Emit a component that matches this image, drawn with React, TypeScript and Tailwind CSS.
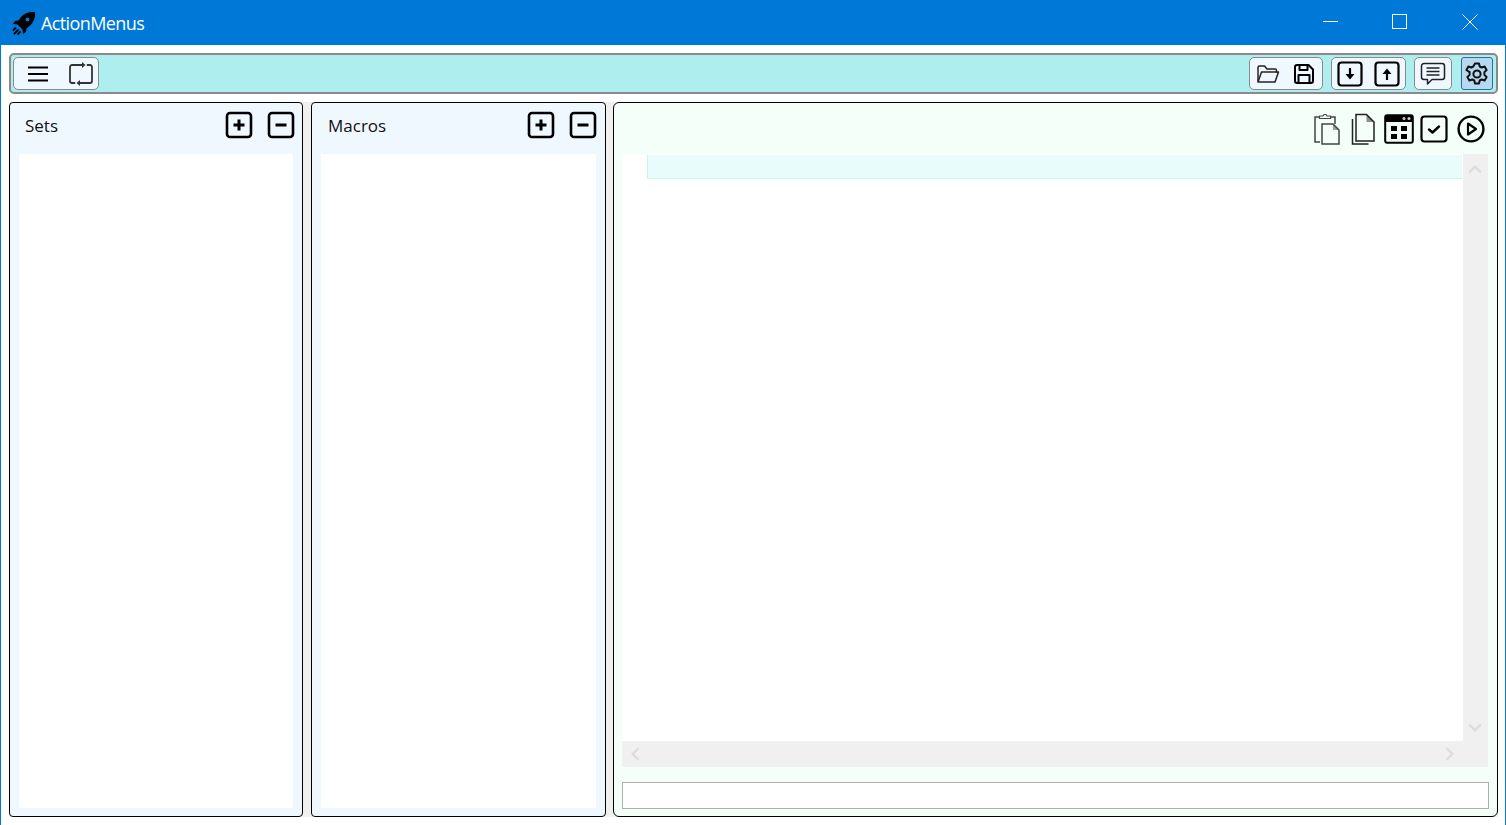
import React from "react";

const stroke = { fill: "none", stroke: "currentColor", strokeLinecap: "round", strokeLinejoin: "round" } as const;

function BoxIcon({ children }: { children: React.ReactNode }) {
    return (
        <svg width="28" height="28" viewBox="0 0 28 28" className="text-black">
            <rect x="2" y="2" width="24" height="24" rx="3" {...stroke} strokeWidth="2.6" />
            {children}
        </svg>
    );
}

function Rocket() {
    return (
        <svg width="24" height="24" viewBox="0 0 24 24" className="text-black">
            <path d="M23 1c-6-.5-10.500 1-14 5L6.500 9.500 3 10l-2 3 4.500.5 5 5 .5 4.500 3-2 .5-3.500 3.500-3c4-3.500 5.500-8 5-14z" fill="currentColor" />
            <circle cx="15.500" cy="8.500" r="2" fill="#0078d7" />
            <path d="M3.500 17l-2 2M6 19l-3.500 3.500M8 21l-2 2" {...stroke} strokeWidth="1.800" />
        </svg>
    );
}

function Hamburger() {
    return (
        <svg width="22" height="18" viewBox="0 0 22 18" className="text-black">
            <path d="M1 2.500h20M1 9h20M1 15.500h20" {...stroke} strokeWidth="2.200" strokeLinecap="butt" />
        </svg>
    );
}

function Repeat() {
    return (
        <svg width="24" height="24" viewBox="0 0 24 24" className="text-[#333]">
            <path d="M13 3H3a2 2 0 0 0-2 2v14a2 2 0 0 0 2 2h2.500" {...stroke} strokeWidth="1.800" />
            <path d="M11 21h10a2 2 0 0 0 2-2V5a2 2 0 0 0-2-2h-2.500" {...stroke} strokeWidth="1.800" />
            <path d="M13 0l3.500 3-3.500 3z" fill="currentColor" />
            <path d="M11 18l-3.500 3 3.500 3z" fill="currentColor" />
        </svg>
    );
}

function Folder() {
    return (
        <svg width="24" height="20" viewBox="0 0 24 20" className="text-[#222]">
            <path d="M2 17V3.500A1.500 1.500 0 0 1 3.500 2h5l2.500 3h8a1.500 1.500 0 0 1 1.500 1.500V8" {...stroke} strokeWidth="1.500" />
            <path d="M2 18l3.500-10h17L19 18H2z" {...stroke} strokeWidth="1.500" />
        </svg>
    );
}

function Floppy() {
    return (
        <svg width="22" height="22" viewBox="0 0 22 22" className="text-black">
            <path d="M4 2h11.500L20 6.500V18a2 2 0 0 1-2 2H4a2 2 0 0 1-2-2V4a2 2 0 0 1 2-2z" {...stroke} strokeWidth="2" />
            <path d="M6.500 2.500v4.500h8V2.500M5.500 20v-8h11v8" {...stroke} strokeWidth="2" />
        </svg>
    );
}

function Comment() {
    return (
        <svg width="26" height="26" viewBox="0 0 26 26" className="text-[#222]">
            <path d="M4 2.500h18a2.500 2.500 0 0 1 2.500 2.500v11a2.500 2.500 0 0 1-2.500 2.500H12l-4.500 4.500v-4.500H4A2.500 2.500 0 0 1 1.500 16V5A2.500 2.500 0 0 1 4 2.500z" {...stroke} strokeWidth="1.500" />
            <path d="M6.500 7h13M6.500 10.500h13M6.500 14h13" {...stroke} strokeWidth="1.600" strokeLinecap="butt" />
        </svg>
    );
}

function Gear() {
    return (
        <svg width="24" height="24" viewBox="0 0 24 24" className="text-[#111]">
            <path d="M10 1.500h4l.700 3 2 1 2.900-1 2 3.500-2.200 2.100v2.800l2.200 2.100-2 3.500-2.900-1-2 1-.700 3h-4l-.700-3-2-1-2.900 1-2-3.500 2.200-2.100v-2.800L1.400 8l2-3.500 2.900 1 2-1z" {...stroke} strokeWidth="2" />
            <circle cx="12" cy="12" r="3.600" {...stroke} strokeWidth="2" />
        </svg>
    );
}

function Paste() {
    return (
        <svg width="28" height="32" viewBox="0 0 28 32" className="text-[#444]">
            <path d="M7 29H2V4h4.500M17 4h5v7" {...stroke} strokeWidth="1.500" strokeLinecap="butt" strokeLinejoin="miter" />
            <path d="M6.500 5.500V3H10l1-1.500h2L14 3h3.500v2.500z" {...stroke} strokeWidth="1.200" />
            <path d="M9 11h11l6 6v14H9z" fill="#f5fffa" stroke="currentColor" strokeWidth="1.500" />
            <path d="M20 11v6h6z" fill="currentColor" opacity="0.500" />
        </svg>
    );
}

function Copy() {
    return (
        <svg width="26" height="32" viewBox="0 0 26 32" className="text-[#222]">
            <path d="M2.500 6v25h16" {...stroke} strokeWidth="1.500" strokeLinecap="butt" strokeLinejoin="miter" />
            <path d="M6 1.500h10.500L24 9v19H6z" fill="#f5fffa" stroke="currentColor" strokeWidth="1.500" />
            <path d="M16.500 1.500V9H24z" fill="currentColor" opacity="0.500" />
        </svg>
    );
}

function Calendar() {
    return (
        <svg width="30" height="30" viewBox="0 0 30 30" className="text-black">
            <rect x="1.200" y="1.200" width="27.600" height="27.600" rx="2" {...stroke} strokeWidth="2" />
            <path d="M1 3a2 2 0 0 1 2-2h24a2 2 0 0 1 2 2v5H1z" fill="currentColor" />
            <circle cx="20" cy="4.500" r="1.500" fill="#ccc" />
            <circle cx="25" cy="4.500" r="1.500" fill="#ccc" />
            <path d="M7 12h6v5H7zM17 12h6v5h-6zM7 20h6v5H7zM17 20h6v5h-6z" fill="currentColor" />
        </svg>
    );
}

function Check() {
    return (
        <svg width="28" height="28" viewBox="0 0 28 28" className="text-black">
            <rect x="1.500" y="1.500" width="25" height="25" rx="3" {...stroke} strokeWidth="2.200" />
            <path d="M9 14.500l3.500 3 6.500-6" {...stroke} strokeWidth="2.400" />
        </svg>
    );
}

function Play() {
    return (
        <svg width="28" height="28" viewBox="0 0 28 28" className="text-black">
            <circle cx="14" cy="14" r="12.400" {...stroke} strokeWidth="2.400" />
            <path d="M11 8.500l8 5.500-8 5.500z" {...stroke} strokeWidth="2.200" />
        </svg>
    );
}

function ArrowBox({ up }: { up?: boolean }) {
    return (
        <svg width="26" height="26" viewBox="0 0 26 26" className="text-black">
            <rect x="1.500" y="1.500" width="23" height="23" rx="3" {...stroke} strokeWidth="2.200" />
            {up ? (
                <path d="M11.900 19v-6H8.500L13 7.500l4.500 5.500h-3.400v6z" fill="currentColor" />
            ) : (
                <path d="M11.900 7v6H8.500l4.500 5.500 4.500-5.500h-3.400V7z" fill="currentColor" />
            )}
        </svg>
    );
}

function ToolGroup({ children, className }: { children: React.ReactNode; className: string }) {
    return (
        <div className={`flex h-[33px] items-center rounded-[5px] border-[1.500px] border-[#8a8a8a] bg-[#f0f8ff] ${className}`}>
            {children}
        </div>
    );
}

function ListPanel({ title, className, headerClass }: { title: string; className: string; headerClass: string }) {
    return (
        <section className={`flex flex-col rounded-[4px] border-[1.500px] border-black bg-[#f0f8ff] ${className}`}>
            <header className={`flex h-[51px] shrink-0 items-center ${headerClass}`}>
                <span className="flex-1 pb-[5px] text-[17px] text-[#111]">{title}</span>
                <div className="flex gap-[14px] pb-[8px]">
                    <BoxIcon>
                        <path d="M14 8.500v11M8.500 14h11" {...stroke} strokeWidth="3" strokeLinecap="butt" />
                    </BoxIcon>
                    <BoxIcon>
                        <path d="M8.500 14h11" {...stroke} strokeWidth="3" strokeLinecap="butt" />
                    </BoxIcon>
                </div>
            </header>
            <div className="mx-[9px] mb-[8px] flex-1 bg-white" />
        </section>
    );
}

function ScrollArrow({ d }: { d: string }) {
    return (
        <svg width="16" height="16" viewBox="0 0 14 14" className="text-[#dcdcdc]">
            <path d={d} {...stroke} strokeWidth="2" strokeLinecap="butt" strokeLinejoin="miter" />
        </svg>
    );
}

export default function App() {
    return (
        <div className="flex h-[825px] w-[1506px] flex-col overflow-hidden border-x border-[#0078d7] bg-white font-['Open_Sans','Noto_Sans',sans-serif]">
            <div className="-mx-px flex h-[45px] shrink-0 items-center bg-[#0078d7] pl-[12px] text-white">
                <Rocket />
                <span className="ml-[5px] flex-1 pt-[2px] text-[18px] tracking-[-0.6px]">ActionMenus</span>
                <div className="flex items-center text-white">
                    <div className="flex w-[70px] justify-center pb-[1px]">
                        <svg width="16" height="16" viewBox="0 0 16 16"><path d="M0 7.500h15" stroke="currentColor" strokeWidth="1" /></svg>
                    </div>
                    <div className="flex w-[68px] justify-center pb-[1px]">
                        <svg width="16" height="16" viewBox="0 0 16 16"><rect x="0.500" y="0.500" width="14" height="14" fill="none" stroke="currentColor" strokeWidth="1" /></svg>
                    </div>
                    <div className="flex w-[72px] justify-center pb-[1px]">
                        <svg width="16" height="16" viewBox="0 0 16 16"><path d="M0.500 0.500l15 15M15.500 0.500l-15 15" stroke="currentColor" strokeWidth="1" /></svg>
                    </div>
                </div>
            </div>

            <div className="flex min-h-0 flex-1 flex-col pt-[8px] pr-[7px] pb-[8px] pl-[8px]">
                <div className="-ml-[0.5px] flex h-[41px] shrink-0 items-center rounded-[5px] border-2 border-[#8a8a8a] bg-[#afeeee] pr-[3px] pl-[2.500px]">
                    <ToolGroup className="w-[86px] justify-between pr-[5px] pl-[13px]">
                        <Hamburger />
                        <Repeat />
                    </ToolGroup>
                    <div className="flex-1" />
                    <ToolGroup className="mr-[8px] w-[74px] justify-between pr-[7px] pl-[6px]">
                        <Folder />
                        <Floppy />
                    </ToolGroup>
                    <ToolGroup className="mr-[8px] w-[75px] justify-between pr-[5px] pl-[4.500px]">
                        <ArrowBox />
                        <ArrowBox up />
                    </ToolGroup>
                    <ToolGroup className="mr-[9px] w-[38px] justify-center">
                        <Comment />
                    </ToolGroup>
                    <div className="flex h-[33px] w-[32px] items-center justify-center rounded-[3px] border-[1.500px] border-[#2f6a9f] bg-[#b5d9ee]">
                        <Gear />
                    </div>
                </div>

                <div className="mt-[8px] flex min-h-0 flex-1 bg-[#f0f0f0]">
                    <ListPanel title="Sets" className="w-[294px] shrink-0" headerClass="pr-[7px] pl-[15px]" />
                    <div className="w-[8px] shrink-0" />
                    <ListPanel title="Macros" className="w-[295px] shrink-0" headerClass="pr-[8px] pl-[16px]" />
                    <div className="w-[7px] shrink-0" />
                    <section className="flex min-w-0 flex-1 flex-col rounded-[6px] border-[1.500px] border-black bg-[#f5fffa] pr-[7.500px] pb-[7px] pl-[7.500px]">
                        <div className="flex h-[51px] shrink-0 items-center justify-end pt-[1px] pr-[5px]">
                            <Paste />
                            <div className="ml-[9px] flex"><Copy /></div>
                            <div className="ml-[8px] flex"><Calendar /></div>
                            <div className="ml-[6px] flex"><Check /></div>
                            <div className="ml-[9px] flex"><Play /></div>
                        </div>
                        <div className="mr-[2px] grid min-h-0 flex-1 grid-cols-[1fr_25px] grid-rows-[1fr_26px]">
                            <div className="bg-white pt-px pr-px pl-[25px]">
                                <div className="h-[24px] border-b border-l border-[#c8f7e8] bg-[#e8fcfc]" />
                            </div>
                            <div className="flex flex-col items-center justify-between bg-[#f0f0f0] pt-[7px] pb-[5px]">
                                <ScrollArrow d="M2 10l5-5 5 5" />
                                <ScrollArrow d="M2 4l5 5 5-5" />
                            </div>
                            <div className="flex items-center justify-between bg-[#f0f0f0] px-[5px]">
                                <ScrollArrow d="M10 2L5 7l5 5" />
                                <ScrollArrow d="M4 2l5 5-5 5" />
                            </div>
                            <div className="bg-[#f0f0f0]" />
                        </div>
                        <div className="mt-[15px] mr-[1px] h-[27px] shrink-0 border-[1.500px] border-[#a9b0ad] bg-white" />
                    </section>
                </div>
            </div>
        </div>
    );
}
